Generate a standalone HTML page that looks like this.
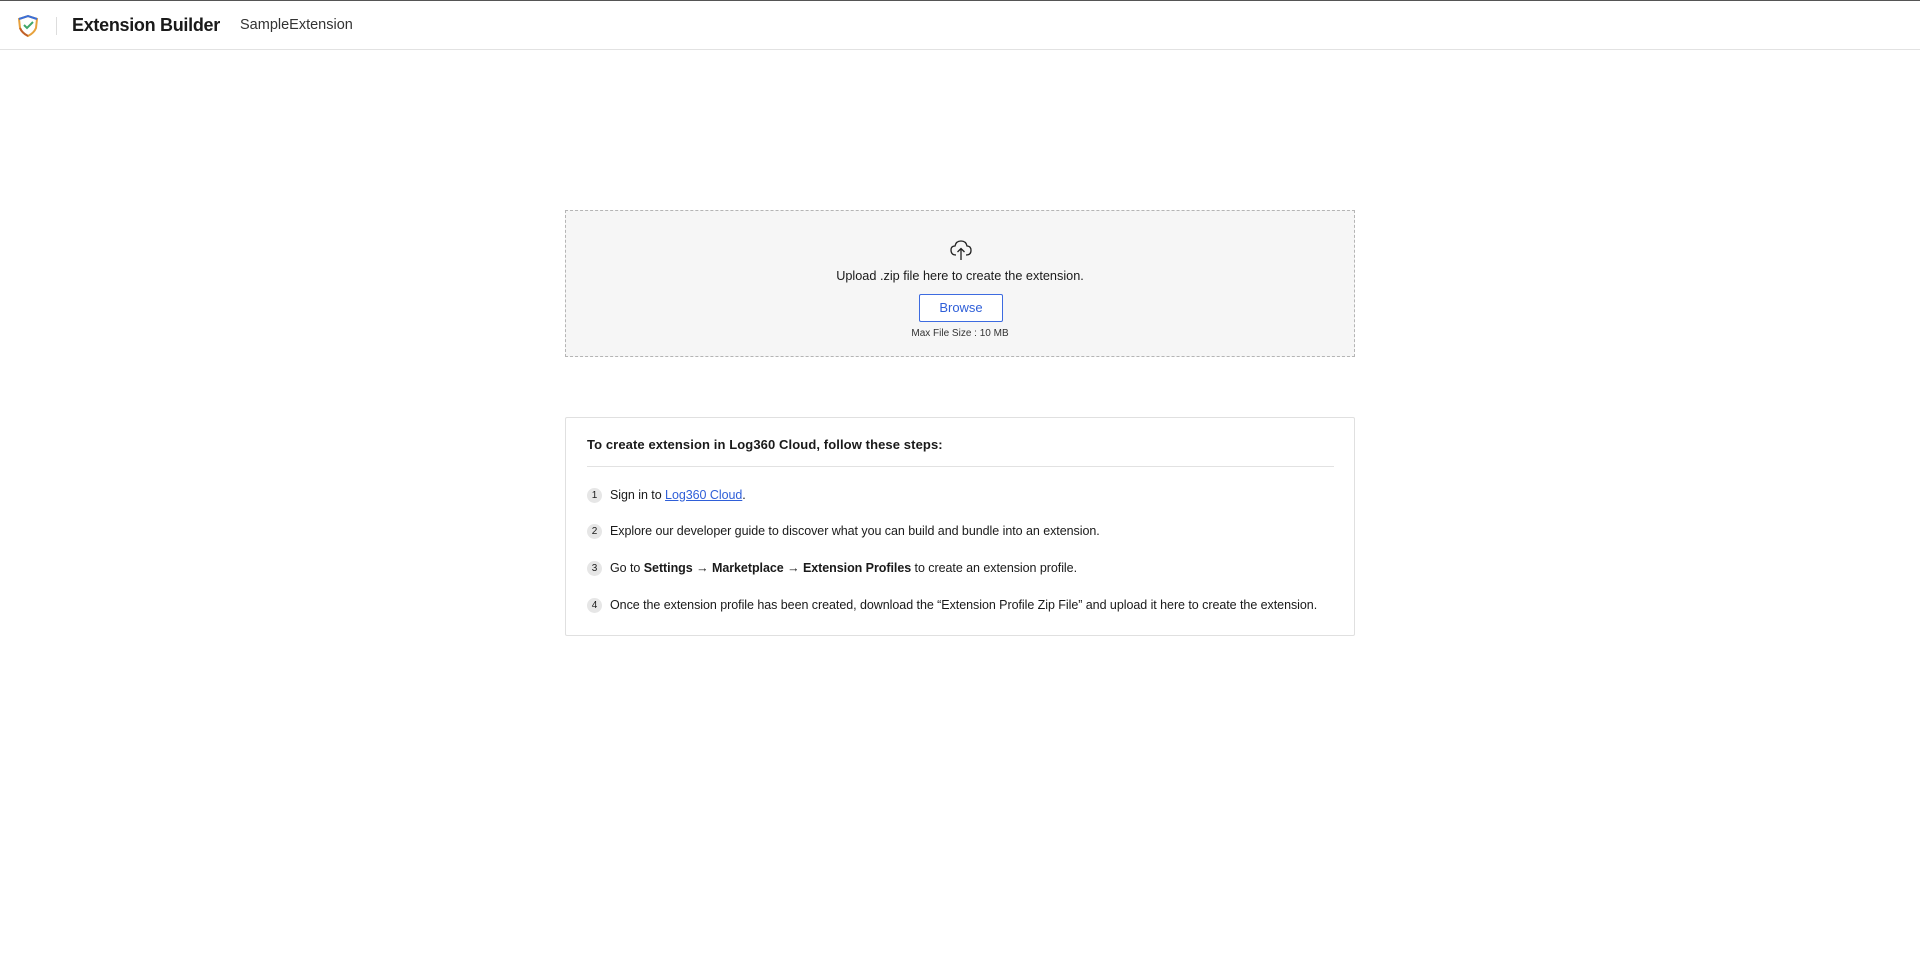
<!DOCTYPE html>
<html><head><meta charset="utf-8"><style>
*{margin:0;padding:0;box-sizing:border-box}
body{width:1920px;height:953px;background:#fff;font-family:"Liberation Sans",sans-serif;color:#1a1a1a;position:relative;overflow:hidden}
.top{position:absolute;left:0;top:0;width:1920px;height:50px;border-top:1px solid #555;border-bottom:1px solid #e2e2e2}
.div{position:absolute;left:56px;top:16px;width:1px;height:18px;background:#ddd}
.title{position:absolute;left:72px;top:14px;font-size:18px;font-weight:bold;letter-spacing:-0.3px}
.sub{position:absolute;left:240px;top:16px;font-size:14.5px;color:#333}
.up{position:absolute;left:565px;top:210px;width:790px;height:147px;background:#f6f6f6;border:1px dashed #b5b5b5}
.c{position:absolute;left:0;width:100%;text-align:center}
.btn{position:absolute;left:353px;top:83px;width:84px;height:28px;border:1px solid #3d6be0;background:#fff;color:#2f5fd8;font-size:13px;line-height:26px;text-align:center;border-radius:2px}
.steps{position:absolute;left:565px;top:417px;width:790px;height:219px;border:1px solid #e0e0e0;border-radius:2px}
.h{position:absolute;left:587px;top:437px;font-size:13px;font-weight:bold;letter-spacing:0.1px}
.hr{position:absolute;left:587px;top:466px;width:747px;height:1px;background:#e2e2e2}
.s{position:absolute;left:587px;font-size:12.5px;height:18px;line-height:18px;letter-spacing:-0.05px}
.s i{display:inline-block;font-style:normal;width:15px;height:15px;border-radius:50%;background:#e6e6e6;font-size:10px;text-align:center;line-height:15px;margin-right:8px;vertical-align:1px}
a{color:#2f5fd8}
</style></head><body>
<div class="top">
<svg style="position:absolute;left:15px;top:13px" width="26" height="24" viewBox="0 0 26 24"><path d="M4 5 L13 2 L22 5 L21 14 Q19 19 13 22 Q7 19 5 14 Z" fill="none" stroke="#e7a13c" stroke-width="2"/><path d="M4 5 L13 2 L22 5" fill="none" stroke="#3b6fd8" stroke-width="2"/><path d="M5 14 Q7 19 13 22" fill="none" stroke="#c0602a" stroke-width="2"/><path d="M9 11 L12 14 L18 8" fill="none" stroke="#3fa66a" stroke-width="2"/></svg>
<div class="div"></div>
<div class="title">Extension Builder</div>
<div class="sub">SampleExtension</div>
</div>
<div class="up">
<svg style="position:absolute;left:382px;top:27px" width="26" height="24" viewBox="0 0 26 24"><path d="M8 17 Q3 17 3 12 Q3 8 7 8 Q8 3 13 3 Q18 3 19 8 Q23 8 23 12.5 Q23 17 18 17" fill="none" stroke="#222" stroke-width="1.3"/><path d="M13 22 V11 M9.5 14 L13 10.5 L16.5 14" fill="none" stroke="#222" stroke-width="1.3"/></svg>
<div class="c" style="top:58px;font-size:12.7px">Upload .zip file here to create the extension.</div>
<div class="btn">Browse</div>
<div class="c" style="top:117px;font-size:10px;color:#333">Max File Size : 10 MB</div>
</div>
<div class="steps"></div>
<div class="h">To create extension in Log360 Cloud, follow these steps:</div>
<div class="hr"></div>
<div class="s" style="top:486px"><i>1</i>Sign in to <a href="#">Log360 Cloud</a>.</div>
<div class="s" style="top:522px"><i>2</i>Explore our developer guide to discover what you can build and bundle into an extension.</div>
<div class="s" style="top:559px"><i>3</i>Go to <b>Settings → Marketplace → Extension Profiles</b> to create an extension profile.</div>
<div class="s" style="top:596px"><i>4</i>Once the extension profile has been created, download the “Extension Profile Zip File” and upload it here to create the extension.</div>
</body></html>
